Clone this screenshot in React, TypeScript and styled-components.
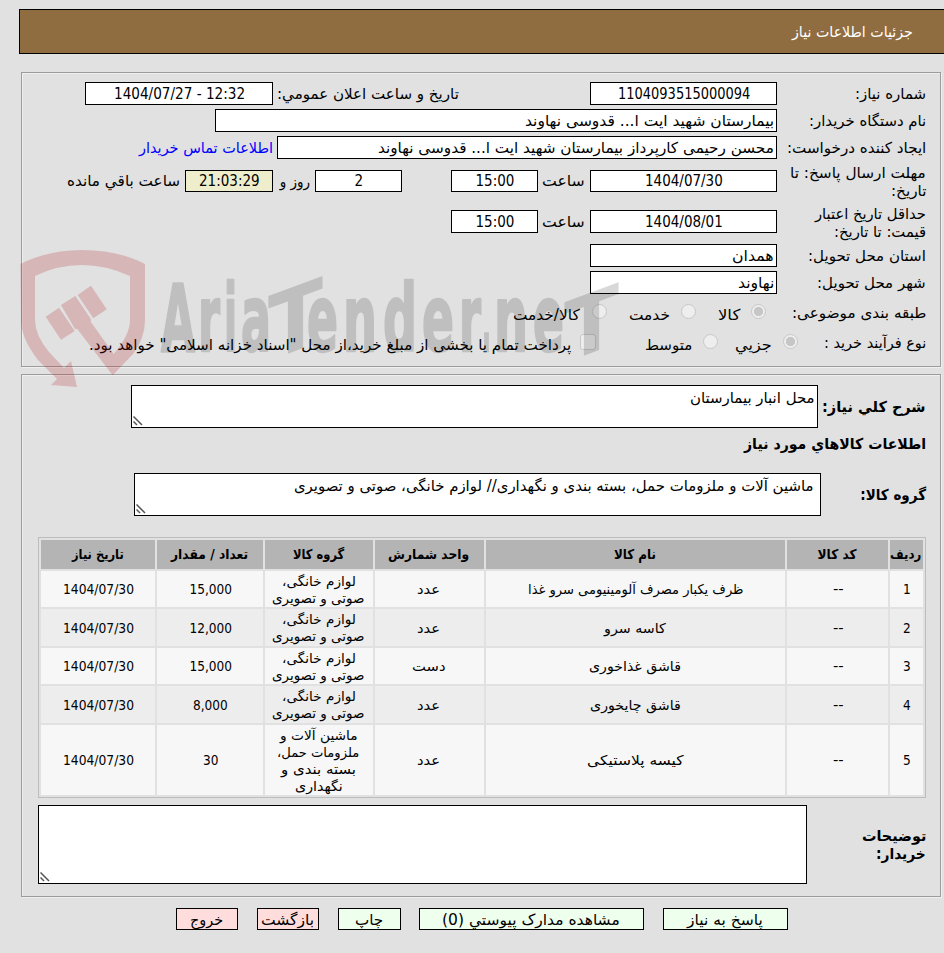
import React, { useLayoutEffect, useRef, useState } from 'react';
import styled, { createGlobalStyle, css } from 'styled-components';

const GlobalStyle = createGlobalStyle`
  html, body { margin: 0; padding: 0; background: #e1e1e1; }
  *, *::before, *::after { box-sizing: border-box; }
`;

const Page = styled.div`
  position: relative;
  width: 944px;
  height: 953px;
  overflow: hidden;
  background: #e1e1e1;
  direction: rtl;
  color: #000;
  font-family: 'DejaVu Sans Condensed', 'DejaVu Sans', 'Noto Sans', sans-serif;
  font-size: 15px;
  line-height: 18px;
`;

const TitleBar = styled.header`
  display: flex;
  align-items: center;
  height: 45px;
  margin: 9px 0 18px 19px;
  padding-right: 31px;
  border: 1px solid #000;
  border-right: 0;
  background: #8f6d41;
  color: #fff;
`;

const Panel = styled.section<{ $height: number; $top: number; $gap?: number }>`
  height: ${(p) => p.$height}px;
  margin: 0 3px ${(p) => p.$gap ?? 0}px 21px;
  padding: ${(p) => p.$top}px 14px 0 16px;
  border: 1px solid #9c9c9c;
  box-shadow: inset 1px 1px 0 #efefef, 1px 1px 0 #efefef;
`;

const Row = styled.div<{ $height: number }>`
  display: flex;
  align-items: center;
  height: ${(p) => p.$height}px;
`;

const Label = styled.div<{ $width: number; $bold?: boolean; $top?: number }>`
  display: flex;
  flex-direction: column;
  flex: none;
  width: ${(p) => p.$width}px;
  padding-top: ${(p) => p.$top ?? 0}px;
  font-weight: ${(p) => (p.$bold ? 700 : 400)};
`;

const Field = styled.div<{ $width: number; $gap?: number; $height?: number; $start?: boolean; $tint?: string }>`
  display: flex;
  flex: none;
  align-items: center;
  justify-content: ${(p) => (p.$start ? 'flex-start' : 'center')};
  width: ${(p) => p.$width}px;
  height: ${(p) => p.$height ?? 23}px;
  margin-right: ${(p) => p.$gap ?? 0}px;
  padding: 0 2px;
  border: 1px solid #000;
  background: ${(p) => p.$tint ?? '#fff'};
`;

const Caption = styled.div<{ $gap: number; $top?: number; $link?: boolean }>`
  flex: none;
  margin-right: ${(p) => p.$gap}px;
  padding-top: ${(p) => p.$top ?? 0}px;
  color: ${(p) => (p.$link ? '#00f' : 'inherit')};
  ${(p) => p.$link && css`cursor: pointer;`}
`;

const Radio = styled.span<{ $gap: number; $on?: boolean }>`
  flex: none;
  width: 15px;
  height: 15px;
  margin-right: ${(p) => p.$gap}px;
  border: 1px solid #c8c8c8;
  border-radius: 50%;
  background: ${(p) => (p.$on ? 'radial-gradient(circle, #c6c6c6 4.3px, #eee 5px)' : '#eee')};
`;

const Checkbox = styled.span<{ $gap: number }>`
  flex: none;
  width: 16px;
  height: 16px;
  margin-right: ${(p) => p.$gap}px;
  border: 1px solid #c8c8c8;
  border-radius: 3px;
  background: #eee;
`;

const TextArea = styled.div<{ $width: number; $height: number; $gap: number; $pad?: number }>`
  display: flex;
  flex: none;
  justify-content: space-between;
  width: ${(p) => p.$width}px;
  height: ${(p) => p.$height}px;
  margin-right: ${(p) => p.$gap}px;
  padding: 3px ${(p) => p.$pad ?? 2}px 1px 1px;
  border: 1px solid #000;
  background: #fff;
`;

const Grip = styled.svg`
  flex: none;
  align-self: flex-end;
  margin-right: auto;
`;

const Table = styled.div`
  display: grid;
  grid-template-columns: 33px 101px 299px 109px 108px 106px 114px;
  grid-template-rows: 29px 36px 37px 36px 37px 70px;
  gap: 2px;
  height: 261px;
  margin-top: 3px;
  padding: 2px;
  border: 1px solid #bdbdbd;
  font-size: 13.5px;
  line-height: 17px;
`;

const Cell = styled.div<{ $kind: 'head' | 'odd' | 'even' }>`
  display: flex;
  flex-direction: column;
  align-items: center;
  justify-content: center;
  overflow: hidden;
  padding-top: ${(p) => (p.$kind === 'head' ? 0 : 1)}px;
  background: ${(p) => ({ head: '#b4b4b4', odd: '#f7f7f7', even: '#ededed' })[p.$kind]};
  font-weight: ${(p) => (p.$kind === 'head' ? 700 : 400)};
`;

const Actions = styled.nav`
  display: flex;
  padding: 11px 156px 0 0;
`;

const Action = styled.button<{ $width: number; $gap?: number; $danger?: boolean }>`
  display: flex;
  flex: none;
  align-items: center;
  justify-content: center;
  width: ${(p) => p.$width}px;
  height: 22px;
  margin: 0 ${(p) => p.$gap ?? 0}px 0 0;
  padding: 1px 0 0;
  border: 1px solid #000;
  background: ${(p) => (p.$danger ? '#ffdddd' : '#eeffee')};
  color: #000;
  font: inherit;
`;

const FitBox = styled.span<{ $w: number; $ltr?: boolean }>`
  display: block;
  flex: none;
  width: ${(p) => p.$w}px;
  white-space: nowrap;
  text-align: start;
  direction: ${(p) => (p.$ltr ? 'ltr' : 'rtl')};
`;

const FitInner = styled.span<{ $ltr?: boolean }>`
  display: inline-block;
  transform-origin: ${(p) => (p.$ltr ? 'left' : 'right')} center;
`;

/** One line of text, condensed or widened to occupy `w` pixels. */
function Fit({ w, ltr, children }: { w: number; ltr?: boolean; children: string }) {
  const ref = useRef<HTMLSpanElement>(null);
  const [scale, setScale] = useState(1);
  useLayoutEffect(() => {
    if (ref.current) setScale((w + 1) / ref.current.offsetWidth);
  }, [w, children]);
  return (
    <FitBox $w={w} $ltr={ltr}>
      <FitInner ref={ref} $ltr={ltr} style={{ transform: `scaleX(${scale})` }}>
        {children}
      </FitInner>
    </FitBox>
  );
}

const ResizeGrip = () => (
  <Grip width="10" height="10" viewBox="0 0 10 10">
    <path d="M0.5 0.5L9 9M0.5 5.5L4 9" stroke="#555" strokeWidth="1.5" fill="none" />
  </Grip>
);

const WatermarkLayer = styled.svg`
  position: absolute;
  left: 0;
  top: 240px;
  pointer-events: none;
`;

const letters: [string, number, number][] = [
  ['A', 161, 34], ['r', 198, 22], ['i', 224, 13], ['a', 241, 30],
  ['e', 307, 31], ['n', 343, 34], ['d', 383, 34], ['e', 422, 32],
  ['r', 459, 22], ['.', 482, 9], ['n', 494, 34], ['e', 533, 31],
];

const Watermark = () => (
  <WatermarkLayer width="640" height="150" viewBox="0 240 640 150" direction="ltr">
    <g fill="rgb(175,25,30)" opacity="0.21">
      <path d="M20.5 264Q48 250 82 250Q118 250 145 264V320Q145 338 133 354L112.7 375.3L77.3 329L75 329L61 305L75.3 296L91 319.3L90.7 321.7L113.7 354Q130 335 130 320V276Q106 265 82 265Q57 265 35 276V320Q35 335 49 352L64 368L71 361L77 387L51 385L57 379L38 360Q21 338 21 320Z" />
      <path d="M45.7 316.7L59 307.7L74.7 331L61 339.7Z M77.7 295L91 285.7L106.7 309.3L93.3 318.3Z" />
    </g>
    <g
      fill="#111"
      stroke="#111"
      strokeWidth="2.5"
      strokeLinejoin="round"
      opacity="0.155"
      fontFamily="'DejaVu Sans Condensed', 'DejaVu Sans', sans-serif"
      fontWeight="700"
    >
      {letters.map(([ch, x, w], i) => (
        <text key={i} x={x} y="351" fontSize="93" textLength={w} lengthAdjust="spacingAndGlyphs">
          {ch}
        </text>
      ))}
      <g strokeWidth="0">
        <text transform="matrix(1 -0.37 0 1 268 361)" x="0" y="0" fontSize="89" textLength="55" lengthAdjust="spacingAndGlyphs">T</text>
        <text transform="matrix(1 -0.37 0 1 564 363)" x="0" y="0" fontSize="83" textLength="55" lengthAdjust="spacingAndGlyphs">T</text>
      </g>
    </g>
  </WatermarkLayer>
);

type Line = [string, number];
const headings: Line[] = [
  ['ردیف', 30], ['کد کالا', 38], ['نام کالا', 41], ['واحد شمارش', 80],
  ['گروه کالا', 50], ['تعداد / مقدار', 76], ['تاریخ نیاز', 51],
];
const household: Line[] = [['لوازم خانگی،', 73], ['صوتی و تصویری', 91]];
const packaging: Line[] = [['ماشین آلات و', 77], ['ملزومات حمل،', 81], ['بسته بندی و', 74], ['نگهداری', 47]];
const items: { name: Line; unit: Line; group: Line[]; count: Line }[] = [
  { name: ['ظرف یکبار مصرف آلومینیومی سرو غذا', 215], unit: ['عدد', 22], group: household, count: ['15,000', 41] },
  { name: ['کاسه سرو', 61], unit: ['عدد', 22], group: household, count: ['12,000', 41] },
  { name: ['قاشق غذاخوری', 91], unit: ['دست', 33], group: household, count: ['15,000', 41] },
  { name: ['قاشق چایخوری', 90], unit: ['عدد', 22], group: household, count: ['8,000', 34] },
  { name: ['کیسه پلاستیکی', 96], unit: ['عدد', 22], group: packaging, count: ['30', 14] },
];

export default function App() {
  return (
    <>
      <GlobalStyle />
      <Page>
        <TitleBar><Fit w={120}>جزئیات اطلاعات نیاز</Fit></TitleBar>

        <Panel $height={295} $top={7} $gap={7}>
          <Row $height={27}>
            <Label $width={149}><Fit w={70}>شماره نیاز:</Fit></Label>
            <Field $width={187}><Fit w={131} ltr>1104093515000094</Fit></Field>
            <Caption $gap={131}><Fit w={181}>تاریخ و ساعت اعلان عمومي:</Fit></Caption>
            <Field $width={188} $gap={5}><Fit w={130} ltr>1404/07/27 - 12:32</Fit></Field>
          </Row>
          <Row $height={27}>
            <Label $width={149}><Fit w={116}>نام دستگاه خریدار:</Fit></Label>
            <Field $width={562} $start><Fit w={248}>بیمارستان شهید ایت ا... قدوسی نهاوند</Fit></Field>
          </Row>
          <Row $height={27}>
            <Label $width={149}><Fit w={138}>ایجاد کننده درخواست:</Fit></Label>
            <Field $width={500} $start><Fit w={395}>محسن رحیمی کارپرداز بیمارستان شهید ایت ا... قدوسی نهاوند</Fit></Field>
            <Caption $gap={4} $link><Fit w={133}>اطلاعات تماس خریدار</Fit></Caption>
          </Row>
          <Row $height={40}>
            <Label $width={149} $top={2}><Fit w={135}>مهلت ارسال پاسخ: تا</Fit><Fit w={34}>تاریخ:</Fit></Label>
            <Field $width={187} $height={22}><Fit w={77} ltr>1404/07/30</Fit></Field>
            <Caption $gap={5}><Fit w={42}>ساعت</Fit></Caption>
            <Field $width={87} $gap={5} $height={22}><Fit w={38} ltr>15:00</Fit></Field>
            <Field $width={87} $gap={49} $height={22}><Fit w={8} ltr>2</Fit></Field>
            <Caption $gap={5} $top={2}><Fit w={29}>روز و</Fit></Caption>
            <Field $width={88} $gap={8} $height={22} $tint="#eeeecc"><Fit w={60} ltr>21:03:29</Fit></Field>
            <Caption $gap={5}><Fit w={112}>ساعت باقي مانده</Fit></Caption>
          </Row>
          <Row $height={41}>
            <Label $width={149} $top={2}><Fit w={110}>حداقل تاریخ اعتبار</Fit><Fit w={91}>قیمت: تا تاریخ:</Fit></Label>
            <Field $width={187}><Fit w={77} ltr>1404/08/01</Fit></Field>
            <Caption $gap={5}><Fit w={42}>ساعت</Fit></Caption>
            <Field $width={87} $gap={5}><Fit w={38} ltr>15:00</Fit></Field>
          </Row>
          <Row $height={27}>
            <Label $width={149}><Fit w={117}>استان محل تحویل:</Fit></Label>
            <Field $width={187} $start><Fit w={41}>همدان</Fit></Field>
          </Row>
          <Row $height={27}>
            <Label $width={149}><Fit w={108}>شهر محل تحویل:</Fit></Label>
            <Field $width={187} $start><Fit w={35}>نهاوند</Fit></Field>
          </Row>
          <Row $height={31}>
            <Label $width={133} $top={3}><Fit w={133}>طبقه بندی موضوعی:</Fit></Label>
            <Radio $gap={27} $on />
            <Caption $gap={11} $top={6}><Fit w={21}>کالا</Fit></Caption>
            <Radio $gap={23} />
            <Caption $gap={11} $top={6}><Fit w={40}>خدمت</Fit></Caption>
            <Radio $gap={23} />
            <Caption $gap={12} $top={6}><Fit w={66}>کالا/خدمت</Fit></Caption>
          </Row>
          <Row $height={29}>
            <Label $width={101} $top={3}><Fit w={101}>نوع فرآیند خرید :</Fit></Label>
            <Radio $gap={27} $on />
            <Caption $gap={11} $top={7}><Fit w={36}>جزيي</Fit></Caption>
            <Radio $gap={18} />
            <Caption $gap={11} $top={7}><Fit w={46}>متوسط</Fit></Caption>
            <Checkbox $gap={50} />
            <Caption $gap={9} $top={7}><Fit w={481}>پرداخت تمام یا بخشی از مبلغ خرید،از محل "اسناد خزانه اسلامی" خواهد بود.</Fit></Caption>
          </Row>
        </Panel>

        <Panel $height={523} $top={6}>
          <Row $height={51}>
            <Label $width={103} $bold><Fit w={103}>شرح کلي نیاز:</Fit></Label>
            <TextArea $width={687} $height={43} $gap={5}><Fit w={124}>محل انبار بیمارستان</Fit><ResizeGrip /></TextArea>
          </Row>
          <Row $height={23}>
            <Label $width={181} $bold><Fit w={181}>اطلاعات کالاهاي مورد نیاز</Fit></Label>
          </Row>
          <Row $height={79}>
            <Label $width={105} $bold><Fit w={65}>گروه کالا:</Fit></Label>
            <TextArea $width={687} $height={43} $gap={0} $pad={7}><Fit w={518}>ماشین آلات و ملزومات حمل، بسته بندی و نگهداری// لوازم خانگی، صوتی و تصویری</Fit><ResizeGrip /></TextArea>
          </Row>
          <Table>
            {headings.map(([t, w]) => <Cell key={t} $kind="head"><Fit w={w}>{t}</Fit></Cell>)}
            {items.map((it, i) => {
              const kind = i % 2 ? 'even' : 'odd';
              return (
                <React.Fragment key={i}>
                  <Cell $kind={kind}><Fit w={7} ltr>{String(i + 1)}</Fit></Cell>
                  <Cell $kind={kind}><Fit w={10} ltr>--</Fit></Cell>
                  <Cell $kind={kind}><Fit w={it.name[1]}>{it.name[0]}</Fit></Cell>
                  <Cell $kind={kind}><Fit w={it.unit[1]}>{it.unit[0]}</Fit></Cell>
                  <Cell $kind={kind}>{it.group.map(([t, w]) => <Fit key={t} w={w}>{t}</Fit>)}</Cell>
                  <Cell $kind={kind}><Fit w={it.count[1]} ltr>{it.count[0]}</Fit></Cell>
                  <Cell $kind={kind}><Fit w={70} ltr>1404/07/30</Fit></Cell>
                </React.Fragment>
              );
            })}
          </Table>
          <Row $height={93}>
            <Label $width={119} $bold><Fit w={63}>توضیحات</Fit><Fit w={49}>خریدار:</Fit></Label>
            <TextArea $width={769} $height={79} $gap={0}><ResizeGrip /></TextArea>
          </Row>
        </Panel>

        <Actions>
          <Action $width={125}><Fit w={75}>پاسخ به نیاز</Fit></Action>
          <Action $width={225} $gap={19}><Fit w={177}>مشاهده مدارک پیوستي (0)</Fit></Action>
          <Action $width={63} $gap={18}><Fit w={27}>چاپ</Fit></Action>
          <Action $width={62} $gap={19} $danger><Fit w={52}>بازگشت</Fit></Action>
          <Action $width={62} $gap={19} $danger><Fit w={32}>خروج</Fit></Action>
        </Actions>
        <Watermark />
      </Page>
    </>
  );
}
